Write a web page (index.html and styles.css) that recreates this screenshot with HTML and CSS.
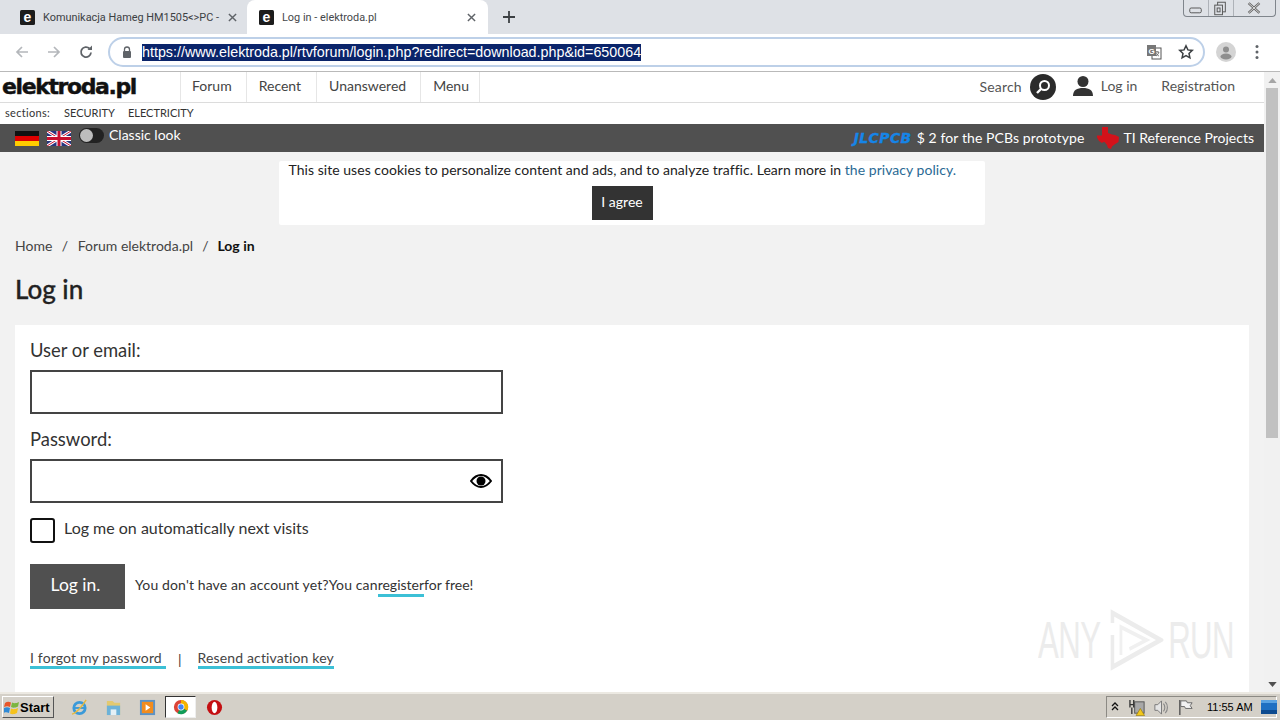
FILE: index.html
```html
<!DOCTYPE html>
<html lang="en">
<head>
<meta charset="utf-8">
<title>Log in - elektroda</title>
<link rel="stylesheet" href="styles.css">
</head>
<body>
<div class="screen">
  <div class="tabstrip">
    <div class="tab inactive">
      <svg class="favicon" viewBox="0 0 15 15"><rect width="15" height="15" rx="1.500" fill="#1c1c1c"/><text x="7.500" y="12" text-anchor="middle" class="fav-e">e</text></svg>
      <span class="tab-title">Komunikacja Hameg HM1505&lt;&gt;PC -</span>
      <svg class="tab-x" viewBox="0 0 10 10"><path d="M1 1l8 8M9 1l-8 8" stroke="#5f6368" stroke-width="1.600"/></svg>
    </div>
    <div class="tab active">
      <svg class="favicon" viewBox="0 0 15 15"><rect width="15" height="15" rx="1.500" fill="#1c1c1c"/><text x="7.500" y="12" text-anchor="middle" class="fav-e">e</text></svg>
      <span class="tab-title">Log in - elektroda.pl</span>
      <svg class="tab-x" viewBox="0 0 10 10"><path d="M1 1l8 8M9 1l-8 8" stroke="#5f6368" stroke-width="1.600"/></svg>
    </div>
    <svg class="newtab" viewBox="0 0 12 12"><path d="M6 0v12M0 6h12" stroke="#3c4043" stroke-width="1.800"/></svg>
    <div class="winctl">
      <svg class="wc" viewBox="0 0 25 16"><rect x="6" y="8" width="12" height="5" rx="1.500" fill="none" stroke="#555"/></svg>
      <svg class="wc" viewBox="0 0 25 16"><rect x="9" y="2" width="8" height="10" fill="#dee1e6" stroke="#555"/><rect x="6" y="5" width="8" height="10" fill="#dee1e6" stroke="#555"/><rect x="8.500" y="8" width="3" height="4" fill="none" stroke="#555"/></svg>
      <svg class="wc wide" viewBox="0 0 42 16"><path d="M15 3l11 10M26 3l-11 10" stroke="#666" stroke-width="2.600" fill="none"/><path d="M15 3l11 10M26 3l-11 10" stroke="#e6e6e6" stroke-width="0.900" fill="none"/></svg>
    </div>
  </div>

  <div class="toolbar">
    <svg class="navicon" viewBox="0 0 16 16"><path d="M14 8H3M8 3L3 8l5 5" fill="none" stroke="#b4b7bb" stroke-width="1.700"/></svg>
    <svg class="navicon" viewBox="0 0 16 16"><path d="M2 8h11M8 3l5 5-5 5" fill="none" stroke="#b4b7bb" stroke-width="1.700"/></svg>
    <svg class="navicon" viewBox="0 0 16 16"><path d="M13 8.500A5 5 0 1 1 11.500 4.500" fill="none" stroke="#5f6368" stroke-width="1.800"/><path d="M9.500 6H14V1.500z" fill="#5f6368"/></svg>
    <div class="omnibox">
      <svg class="lock" viewBox="0 0 10 12"><path d="M2.500 5V3.500a2.500 2.500 0 0 1 5 0V5" fill="none" stroke="#5f6368" stroke-width="1.300"/><rect x="1" y="5" width="8" height="7" rx="1" fill="#5f6368"/></svg>
      <span class="url">https://www.elektroda.pl/rtvforum/login.php?redirect=download.php&amp;id=650064</span>
      <svg class="translate" viewBox="0 0 16 16"><rect x="6" y="4" width="9" height="11" fill="#fff" stroke="#555"/><path d="M9 8h4M11 7v1M10 12c1.500-1 2.500-2.500 3-4M10 9c.6 1.400 1.800 2.600 3 3" fill="none" stroke="#555" stroke-width=".8"/><rect x="1" y="1" width="9" height="11" fill="#777"/><text x="5.500" y="9.500" text-anchor="middle" class="tr-g">G</text></svg>
      <svg class="star" viewBox="0 0 16 16"><path d="M8 1.800l1.900 4.100 4.400.5-3.300 3 .9 4.400L8 11.600l-3.900 2.200.9-4.400-3.300-3 4.400-.5z" fill="none" stroke="#3c4043" stroke-width="1.500"/></svg>
    </div>
    <svg class="avatar" viewBox="0 0 20 20"><circle cx="10" cy="10" r="10" fill="#d4d4d4"/><circle cx="10" cy="7.500" r="3" fill="#8e8e8e"/><ellipse cx="10" cy="14.500" rx="5.500" ry="3" fill="#8e8e8e"/></svg>
    <svg class="kebab" viewBox="0 0 4 16"><circle cx="2" cy="2.500" r="1.500" fill="#5f6368"/><circle cx="2" cy="8" r="1.500" fill="#5f6368"/><circle cx="2" cy="13.500" r="1.500" fill="#5f6368"/></svg>
  </div>

  <div class="viewport">
    <main class="page">
      <header class="sitehead">
        <a class="logo">elektroda.pl</a>
        <nav class="mainnav">
          <a>Forum</a><a>Recent</a><a>Unanswered</a><a>Menu</a>
        </nav>
        <div class="headright">
          <span class="searchlabel">Search</span>
          <span class="searchbtn"><svg viewBox="0 0 26 26"><circle cx="14.500" cy="11.500" r="4.500" fill="none" stroke="#fff" stroke-width="2"/><path d="M11 15l-4 4" stroke="#fff" stroke-width="2.400"/></svg></span>
          <svg class="usericon" viewBox="0 0 20 20"><circle cx="10" cy="5.500" r="5.500" fill="#333"/><path d="M0 20c0-6 4-8 10-8s10 2 10 8z" fill="#333"/></svg>
          <span class="loginlink">Log in</span>
          <span class="reglink">Registration</span>
        </div>
      </header>
      <div class="sections">
        <span class="sec-label">sections:</span><a>SECURITY</a><a>ELECTRICITY</a>
      </div>
      <div class="darkbar">
        <svg class="flag" viewBox="0 0 24 15"><rect width="24" height="5" fill="#111"/><rect y="5" width="24" height="5" fill="#d00"/><rect y="10" width="24" height="5" fill="#fc0"/></svg>
        <svg class="flag uk" viewBox="0 0 24 15"><rect width="24" height="15" fill="#27357e"/><path d="M0 0l24 15M24 0L0 15" stroke="#fff" stroke-width="3"/><path d="M0 0l24 15M24 0L0 15" stroke="#c8102e" stroke-width="1"/><path d="M12 0v15M0 7.500h24" stroke="#fff" stroke-width="5"/><path d="M12 0v15M0 7.500h24" stroke="#c8102e" stroke-width="3"/></svg>
        <span class="toggle"><span class="knob"></span></span>
        <span class="classic">Classic look</span>
        <div class="promos">
          <span class="jlc">JLCPCB</span>
          <span class="promo">$ 2 for the PCBs prototype</span>
          <svg class="ti" viewBox="0 0 22 22"><path d="M5 0h6v6l4 1.500 3 .5 4 2-.5 5-4 2.500-2.500 2-1 2.500-3-1-1-3-2.500-3H6.500L5 16 2 14 0 10.500 0 8.500h5z" fill="#d3121a"/></svg>
          <span class="promo strong">TI Reference Projects</span>
        </div>
      </div>

      <div class="cookiewrap">
        <div class="cookie">
          <p>This site uses cookies to personalize content and ads, and to analyze traffic. Learn more in <a>the privacy policy.</a></p>
          <button class="agree"><span>I agree</span></button>
        </div>
      </div>

      <div class="crumbs"><a>Home</a><i>/</i><a>Forum elektroda.pl</a><i>/</i><b>Log in</b></div>
      <h1>Log in</h1>

      <section class="card">
        <label class="fieldlabel">User or email:</label>
        <div class="inputbox"></div>
        <label class="fieldlabel second">Password:</label>
        <div class="inputbox pw">
          <svg class="eye" viewBox="0 0 22 14"><path d="M1 7c3-4 6.500-6 10-6s7 2 10 6c-3 4-6.500 6-10 6S4 11 1 7z" fill="#fff" stroke="#000" stroke-width="2"/><circle cx="11" cy="7" r="4.500" fill="#000"/></svg>
        </div>
        <div class="remember"><span class="check"></span><span class="rememberlabel">Log me on automatically next visits</span></div>
        <div class="submitrow">
          <button class="loginbtn"><span>Log in.</span></button>
          <span class="regtext"><span class="regintro">You don't have an account yet?You can</span><a>register</a>for free!</span>
        </div>
        <div class="links"><a>I forgot my password</a><span class="sep">|</span><a>Resend activation key</a></div>
      </section>

      <div class="watermark">
        <span>ANY</span>
        <svg viewBox="0 0 78 62" preserveAspectRatio="none"><path d="M6 14V4l68 27-68 27V26" fill="none" stroke="#ececec" stroke-width="5"/><path d="M18 46V18l36 13-24 9" fill="none" stroke="#f0f0f0" stroke-width="4"/></svg>
        <span>RUN</span>
      </div>
    </main>
    <aside class="scrollbar">
      <svg class="arrow" viewBox="0 0 10 6"><path d="M5 0l5 6H0z" fill="#a5a5a5"/></svg>
      <div class="thumb"></div>
      <svg class="arrow down" viewBox="0 0 10 6"><path d="M5 6l5-6H0z" fill="#505050"/></svg>
    </aside>
  </div>

  <footer class="taskbar">
    <div class="startbtn">
      <svg viewBox="0 0 16 16"><path d="M1 4c2-1.500 4-1.500 6-.5l-1 4.500c-2-1-3.500-1-6 0z" fill="#e8562a"/><path d="M8 3.500c2 1 4 1 7-.5l-1 4.500c-3 1.500-5 1.500-7 .5z" fill="#7cb540"/><path d="M0 9c2-1 4-1 6 0l-1 5c-2-1-3.500-1-6 0z" fill="#2f8ad6"/><path d="M7 9.500c2 1 4 1 7-.5l-1 5c-3 1.500-5 1.500-7 .5z" fill="#f5c21c"/></svg>
      <b>Start</b>
    </div>
    <svg class="tb ie" viewBox="0 0 18 18"><circle cx="9" cy="9.500" r="6" fill="none" stroke="#3b9ad9" stroke-width="3"/><path d="M3 9.500h12" stroke="#3b9ad9" stroke-width="2"/><path d="M1 16c4-1 11-8 15-15" stroke="#e7b93c" stroke-width="1.500" fill="none"/></svg>
    <svg class="tb folder" viewBox="0 0 18 18"><path d="M2 2h6l2 2h6v13H2z" fill="#e3c970"/><rect x="2" y="7" width="14" height="10" fill="#6db2d8"/><rect x="6" y="11" width="6" height="6" fill="#e4f0f6"/></svg>
    <svg class="tb media" viewBox="0 0 18 18"><rect x="1" y="1" width="16" height="16" fill="#5b93c7"/><rect x="3" y="3" width="12" height="12" fill="#f28c1e"/><path d="M7 5.500l5 3.500-5 3.500z" fill="#fff"/></svg>
    <div class="tb-active">
      <svg viewBox="0 0 18 18"><circle cx="9" cy="9" r="8" fill="#db4437"/><path d="M9 9L16 13A8 8 0 0 1 5 16z" fill="#0f9d58"/><path d="M9 1a8 8 0 0 1 7 12L9 9z" fill="#f4b400"/><circle cx="9" cy="9" r="3.800" fill="#fff"/><circle cx="9" cy="9" r="3" fill="#4285f4"/></svg>
    </div>
    <svg class="tb opera" viewBox="0 0 18 18"><circle cx="9" cy="9" r="8" fill="#c40f12"/><ellipse cx="9" cy="9" rx="3" ry="6" fill="#fff"/></svg>
    <div class="tray">
      <svg class="updown" viewBox="0 0 8 10"><path d="M1 4l3-3 3 3M1 8l3-3 3 3" fill="none" stroke="#111" stroke-width="1.300"/></svg>
      <svg class="tray-ic net" viewBox="0 0 18 18"><rect x="6" y="3" width="10" height="12" fill="#a8a8a8" stroke="#555"/><path d="M1 1v8M5 1v8M1 6h4M3 9v7" stroke="#333" stroke-width="1.400" fill="none"/><path d="M12 10l4.500 7.500h-9z" fill="#f2c71c" stroke="#8a6d00" stroke-width=".6"/></svg>
      <svg class="tray-ic" viewBox="0 0 18 18"><path d="M2 6h3l4-4v14l-4-4H2z" fill="#e4e4e4" stroke="#777"/><path d="M11 5c2 2 2 6 0 8M13 3c3 3 3 9 0 12" fill="none" stroke="#888" stroke-width="1.200"/></svg>
      <svg class="tray-ic" viewBox="0 0 18 18"><path d="M3 1v16" stroke="#555" stroke-width="1.500"/><path d="M4 2h6l1 2h5l-2 3 2 3H9l-1-2H4z" fill="#f2f2f2" stroke="#666"/></svg>
      <span class="clock">11:55 AM</span>
      <svg class="desk" viewBox="0 0 16 14"><rect width="16" height="14" fill="#1f6fc2"/><rect y="10" width="16" height="4" fill="#0d4a8f"/><rect x="0" y="0" width="16" height="3" fill="#5aa2e2"/></svg>
    </div>
  </footer>
</div>
</body>
</html>
```
FILE: styles.css
```css
* { box-sizing: border-box; }
html, body { margin: 0; padding: 0; height: 100%; overflow: hidden; }
body { font-family: Lato, "Liberation Sans", sans-serif; color: #222; }
button { font-family: inherit; border: 0; padding: 0; }
p { margin: 0; }
.screen { width: 1280px; height: 720px; display: flex; flex-direction: column; overflow: hidden; position: relative; }

/* tab strip */
.tabstrip { height: 34px; background: #dee1e6; display: flex; align-items: stretch; padding-left: 8px; flex: none; }
.tab { display: flex; align-items: center; padding: 0 10px 0 12px; font-family: Roboto, "Liberation Sans", sans-serif; font-size: 11px; color: #3c4043; border-radius: 8px 8px 0 0; }
.tab.inactive { width: 239px; }
.tab.active { background: #fff; width: 241px; padding-right: 12px; color: #45474a; }
.favicon { width: 15px; height: 15px; flex: none; margin-right: 8px; }
.fav-e { fill: #fff; font: bold 14px "Liberation Sans", sans-serif; }
.tab-title { flex: 1; white-space: nowrap; font-size: 10.900px; }
.tab-x { width: 9px; height: 9px; flex: none; margin-top: 1px; }
.newtab { width: 12px; height: 12px; align-self: center; margin-left: 15px; }
.winctl { margin-left: auto; margin-right: 4px; width: 93px; height: 17px; display: flex; border: 1px solid #7f858c; border-top: 0; border-radius: 0 0 4px 4px; }
.wc { width: 25px; height: 16px; border-right: 1px solid #aeb2b8; flex: none; }
.wc.wide { width: 41px; border-right: 0; }

/* toolbar */
.toolbar { height: 38px; background: #fff; border-bottom: 1px solid #b9b9b9; display: flex; align-items: center; padding: 0 0 1px 14px; flex: none; }
.navicon { width: 16px; height: 16px; margin-right: 16px; flex: none; }
.navicon:nth-child(3) { margin-right: 14px; }
.omnibox { width: 1097px; height: 30px; border: 2px solid #bdd0e8; border-radius: 15px; display: flex; align-items: center; padding: 0 9px 0 12px; }
.lock { width: 10px; height: 12px; flex: none; }
.url { background: #0a246a; color: #fff; font-family: "Liberation Sans", sans-serif; font-size: 14.300px; line-height: 17px; margin-left: 10px; white-space: nowrap; }
.translate { width: 16px; height: 16px; margin-left: auto; }
.tr-g { fill: #fff; font: bold 8px "Liberation Sans", sans-serif; }
.star { width: 16px; height: 16px; margin-left: 16px; }
.avatar { width: 20px; height: 20px; margin-left: 11px; flex: none; }
.kebab { width: 4px; height: 16px; margin-left: 19px; flex: none; }

/* viewport */
.viewport { flex: 1; display: flex; min-height: 0; position: relative; }
.page { flex: 1; background: #f2f2f2; overflow: hidden; min-width: 0; position: relative; }
.scrollbar { width: 16px; background: #f1f1f1; display: flex; flex-direction: column; align-items: center; flex: none; padding-top: 6px; }
.arrow { width: 9px; height: 5px; flex: none; }
.thumb { width: 12px; height: 350px; background: #c1c1c1; margin-top: 5px; }
.arrow.down { margin-top: auto; margin-bottom: 5px; }

.sitehead { height: 31px; background: #fff; border-bottom: 1px solid #dcdcdc; display: flex; align-items: stretch; color: #444; font-size: 14px; }
.logo { width: 180px; font-family: "DejaVu Sans", sans-serif; font-weight: bold; font-size: 22px; color: #111; line-height: 29px; padding-left: 2px; letter-spacing: -1.400px; -webkit-text-stroke: .4px #111; white-space: nowrap; }
.mainnav { display: flex; border-left: 1px solid #e6e6e6; }
.mainnav a { display: flex; align-items: center; padding: 0 14px 3px 12px; border-right: 1px solid #e6e6e6; color: #444; height: 30px; }
.mainnav a:nth-child(1) { padding-left: 11px; }
.mainnav a:nth-child(2) { padding-right: 15px; }
.mainnav a:nth-child(4) { padding-right: 10px; }
.headright { margin-left: auto; display: flex; align-items: center; padding-right: 29px; color: #555; }
.searchlabel { letter-spacing: .15px; padding-bottom: 1px; }
.loginlink, .reglink { padding-bottom: 3px; }
.searchbtn { width: 26px; height: 26px; border-radius: 50%; background: #2b2b2b; margin-left: 8px; display: block; margin-top: -1px; }
.searchbtn svg { display: block; width: 26px; height: 26px; }
.usericon { width: 20px; height: 20px; margin-left: 17px; margin-bottom: 2px; }
.loginlink { margin-left: 8px; }
.reglink { margin-left: 24px; }

.sections { height: 21px; background: #fff; display: flex; align-items: center; font-size: 11px; color: #333; padding: 0 0 2px 5px; }
.sec-label { margin-right: 14px; letter-spacing: .3px; }
.sections a { margin-right: 13px; }

.darkbar { height: 28px; background: #505050; display: flex; align-items: center; color: #fff; padding: 0 10px 0 15px; }
.flag { width: 24px; height: 15px; flex: none; margin-top: 1px; }
.flag.uk { margin-left: 8px; }
.toggle { width: 25px; height: 15px; border-radius: 8px; background: #222; margin-left: 8px; display: block; margin-top: -5px; }
.knob { display: block; width: 13px; height: 13px; margin: 1px; border-radius: 50%; background: #bdbdbd; }
.classic { font-size: 14px; margin-left: 5px; margin-top: -7px; }
.promos { margin-left: auto; display: flex; align-items: center; font-size: 14px; padding-bottom: 2px; }
.promo { letter-spacing: .1px; }
.jlc { font-family: "DejaVu Sans", sans-serif; font-style: italic; font-weight: bold; font-size: 14px; color: #1585e8; margin: 2px 5px 0 0; letter-spacing: .4px; -webkit-text-stroke: .3px #1585e8; }
.ti { width: 22px; height: 22px; margin-left: 13px; margin-right: 4px; margin-top: 2px; flex: none; }
.promo.strong { letter-spacing: 0; }

.cookiewrap { display: flex; justify-content: center; padding: 9px 0 0 0; margin-left: -1px; }
.cookie { width: 706px; height: 64px; background: #fff; border-radius: 2px; display: flex; flex-direction: column; align-items: flex-start; font-size: 14px; color: #222; padding: 0 0 0 10px; letter-spacing: .04px; }
.cookie a { color: #2a6a94; }
.agree { width: 61px; height: 34px; background: #333; color: #fff; font-size: 14px; margin: 8px 0 0 303px; padding-bottom: 3px; }

.crumbs { font-size: 14px; padding: 10px 0 0 15px; color: #444; height: 31px; display: flex; align-items: center; }
.crumbs i { font-style: normal; margin: 0 9.500px; }
.crumbs i:nth-of-type(2) { margin: 0 9px; }
.crumbs b { color: #111; }
h1 { font-size: 26px; font-weight: 500; color: #222; margin: 17px 0 0; padding: 0 0 0 15px; height: 32px; line-height: 32px; -webkit-text-stroke: .3px #222; }

.card { margin: 20px 15px 0; background: #fff; height: 380px; padding: 15px; font-size: 16px; color: #333; }
.fieldlabel { display: block; font-size: 18.400px; line-height: 21px; }
.fieldlabel.second { margin-top: 15px; margin-bottom: 9px; }
.inputbox { width: 473px; height: 44px; border: 2px solid #444; margin-top: 9px; position: relative; background: #fff; }
.second + .inputbox { margin-top: 0; }
.eye { position: absolute; right: 9px; top: 13px; width: 22px; height: 14px; }
.remember { display: flex; align-items: flex-start; height: 25px; margin-top: 15px; color: #333; }
.check { width: 25px; height: 25px; border: 2px solid #111; border-radius: 3px; margin-right: 9px; display: block; flex: none; }
.rememberlabel { line-height: 20px; }
.submitrow { display: flex; align-items: center; margin-top: 21px; }
.loginbtn { width: 95px; height: 45px; background: #505050; color: #fff; font-size: 17.500px; padding: 0 4px 5px 0; }
.regtext { font-size: 14px; margin-left: 10px; color: #333; padding-bottom: 5px; }
.regintro { letter-spacing: .13px; }
.regtext a { border-bottom: 3px solid #3cc0d6; padding-bottom: 1px; }
.links { margin-top: 40px; font-size: 14px; display: flex; align-items: center; color: #444; letter-spacing: .15px; }
.links a { border-bottom: 3px solid #3cc0d6; padding: 0 4px 0 0; }
.links a:last-child { padding: 0; }
.sep { margin: 0 16px 0 12px; color: #333; }

.watermark { position: absolute; left: 1038px; top: 537px; display: flex; align-items: center; font-family: "Liberation Sans", sans-serif; font-size: 52px; color: #ececec; letter-spacing: -1px; transform: scaleX(.6); transform-origin: left center; width: 340px; }
.watermark svg { width: 92px; height: 62px; flex: none; margin: 0 8px 0 13px; }

/* taskbar */
.taskbar { height: 28px; background: #d4d0c8; border-top: 2px solid #ece9e2; display: flex; align-items: center; padding-left: 2px; flex: none; font-family: "Liberation Sans", sans-serif; font-size: 11px; color: #000; }
.startbtn { width: 52px; height: 22px; border: 1px solid; border-color: #fff #555 #555 #fff; display: flex; align-items: center; padding-left: 1px; font-size: 13px; background: #d4d0c8; }
.startbtn svg { width: 16px; height: 16px; flex: none; }
.tb { width: 17px; height: 17px; flex: none; }
.ie { margin-left: 17px; }
.folder { margin-left: 17px; }
.media { margin-left: 17px; }
.tb-active { width: 31px; height: 22px; background: #fff; border: 1px solid; border-color: #333 #eee #eee #333; margin-left: 9px; display: flex; align-items: center; justify-content: center; }
.tb-active svg { width: 16px; height: 16px; }
.opera { margin-left: 10px; }
.tray { margin-left: auto; width: 171px; height: 22px; margin-right: 3px; border: 1px solid #8c8a84; border-right-color: #fff; border-bottom-color: #fff; display: flex; align-items: center; padding-left: 4px; }
.updown { width: 8px; height: 10px; flex: none; }
.tray-ic { width: 17px; height: 17px; margin-left: 7px; flex: none; }
.tray-ic.net { margin-left: 10px; }
.clock { margin-left: 13px; white-space: nowrap; }
.desk { width: 16px; height: 14px; margin-left: 8px; flex: none; }
```
